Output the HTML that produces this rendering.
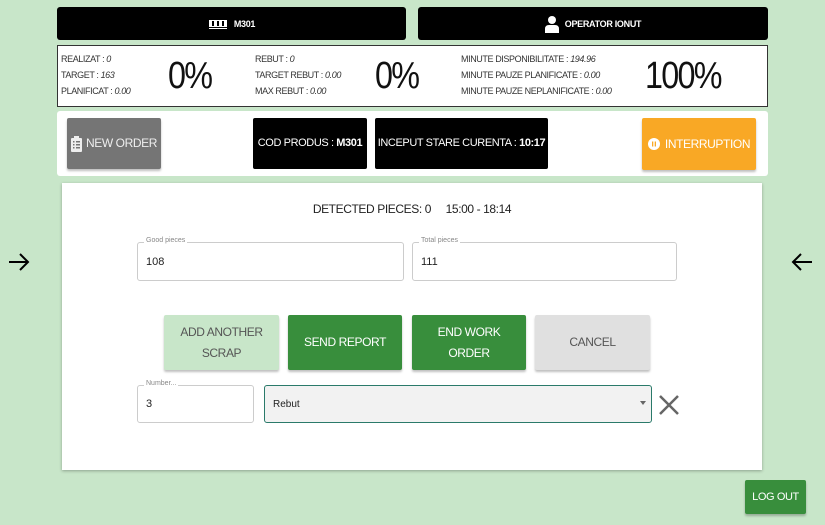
<!DOCTYPE html>
<html><head><style>
*{box-sizing:border-box;margin:0;padding:0}
body{width:825px;height:525px;background:#c8e6c9;font-family:"Liberation Sans",sans-serif;position:relative;overflow:hidden;color:#222}
.a{position:absolute;white-space:nowrap}
.bar{background:#000;color:#fff;border-radius:3px;font-size:9px;font-weight:bold;display:flex;align-items:center;justify-content:center;gap:6px;letter-spacing:-.3px}
.s{font-size:9px;color:#333;line-height:16px;letter-spacing:-.4px}
.s i{font-style:italic}
.big{font-size:38px;color:#111;letter-spacing:-2px;transform:scaleX(.85);transform-origin:left}
.btn{display:flex;align-items:center;justify-content:center;text-align:center;font-size:12px;line-height:21px;border-radius:2px;box-shadow:0 2px 2px rgba(0,0,0,.25);letter-spacing:-.4px}
.fld{background:#fff;border:1px solid #ccc;border-radius:3px;font-size:11px;padding:0 8px;display:flex;align-items:center}
.lbl{position:absolute;top:-6px;left:6px;background:#fff;font-size:7px;color:#888;padding:0 2px}
</style></head><body>
<div class="a bar" style="left:57px;top:7px;width:349px;height:33px"><svg width="20" height="12" viewBox="0 0 20 12"><rect x="1" y="2" width="18" height="7" fill="#fff"/><rect x="4" y="3" width="2" height="5" fill="#000"/><rect x="9" y="3" width="2" height="5" fill="#000"/><rect x="14" y="3" width="2" height="5" fill="#000"/><rect x="1" y="10" width="18" height="1" fill="#fff"/></svg>M301</div>
<div class="a bar" style="left:418px;top:7px;width:350px;height:33px"><svg width="14" height="18" viewBox="0 0 14 18"><circle cx="7" cy="5" r="4" fill="#fff"/><path d="M0 18v-4q0-4 4-4h6q4 0 4 4v4z" fill="#fff"/></svg>OPERATOR IONUT</div>
<div class="a" style="left:57px;top:45px;width:711px;height:62px;background:#fff;border:1px solid #333"></div>
<div class="a s" style="left:61px;top:51px">REALIZAT : <i>0</i><br>TARGET : <i>163</i><br>PLANIFICAT : <i>0.00</i></div>
<div class="a big" style="left:168px;top:55px">0%</div>
<div class="a s" style="left:255px;top:51px">REBUT : <i>0</i><br>TARGET REBUT : <i>0.00</i><br>MAX REBUT : <i>0.00</i></div>
<div class="a big" style="left:375px;top:55px">0%</div>
<div class="a s" style="left:461px;top:51px">MINUTE DISPONIBILITATE : <i>194.96</i><br>MINUTE PAUZE PLANIFICATE : <i>0.00</i><br>MINUTE PAUZE NEPLANIFICATE : <i>0.00</i></div>
<div class="a big" style="left:645px;top:55px">100%</div>
<div class="a" style="left:57px;top:111px;width:711px;height:65px;background:#fff;border-radius:3px"></div>
<div class="a btn" style="left:67px;top:118px;width:94px;height:51px;background:#757575;color:#eee;gap:4px"><svg width="11" height="16" viewBox="0 0 11 16"><rect x="0" y="2" width="11" height="14" rx="1" fill="#eee"/><rect x="3" y="0" width="5" height="3" fill="#eee"/><g fill="#757575"><rect x="2" y="5" width="1.5" height="1.5"/><rect x="5" y="5" width="4" height="1.5"/><rect x="2" y="8" width="1.5" height="1.5"/><rect x="5" y="8" width="4" height="1.5"/><rect x="2" y="11" width="1.5" height="1.5"/><rect x="5" y="11" width="4" height="1.5"/></g></svg>NEW ORDER</div>
<div class="a btn" style="left:253px;top:118px;width:114px;height:51px;background:#000;color:#fff;font-size:11px;box-shadow:none">COD PRODUS :&nbsp;<b>M301</b></div>
<div class="a btn" style="left:375px;top:118px;width:173px;height:51px;background:#000;color:#fff;font-size:11px;box-shadow:none">INCEPUT STARE CURENTA :&nbsp;<b>10:17</b></div>
<div class="a btn" style="left:642px;top:118px;width:114px;height:52px;background:#f9a825;color:#fff;gap:5px"><svg width="12" height="12" viewBox="0 0 12 12"><circle cx="6" cy="6" r="6" fill="#fff"/><rect x="4" y="3.5" width="1.3" height="5" fill="#f9a825"/><rect x="6.7" y="3.5" width="1.3" height="5" fill="#f9a825"/></svg>INTERRUPTION</div>
<div class="a" style="left:62px;top:183px;width:700px;height:287px;background:#fff;box-shadow:0 1px 3px rgba(0,0,0,.3)"></div>
<div class="a" style="left:62px;top:202px;width:700px;text-align:center;font-size:12px;color:#222;letter-spacing:-.4px">DETECTED PIECES: 0 &nbsp;&nbsp;&nbsp;&nbsp;15:00 - 18:14</div>
<div class="a fld" style="left:137px;top:242px;width:267px;height:39px"><span class="lbl">Good pieces</span>108</div>
<div class="a fld" style="left:412px;top:242px;width:265px;height:39px"><span class="lbl">Total pieces</span>111</div>
<div class="a btn" style="left:164px;top:315px;width:115px;height:55px;background:#c8e6c9;color:#555">ADD ANOTHER<br>SCRAP</div>
<div class="a btn" style="left:288px;top:315px;width:114px;height:55px;background:#388e3c;color:#fff">SEND REPORT</div>
<div class="a btn" style="left:412px;top:315px;width:114px;height:55px;background:#388e3c;color:#fff">END WORK<br>ORDER</div>
<div class="a btn" style="left:535px;top:315px;width:115px;height:55px;background:#e0e0e0;color:#555">CANCEL</div>
<div class="a fld" style="left:137px;top:385px;width:117px;height:38px"><span class="lbl">Number...</span>3</div>
<div class="a fld" style="left:264px;top:385px;width:388px;height:38px;background:#f2f2f2;border:1.5px solid #2a7a6a;font-size:10px">Rebut<span style="position:absolute;right:5px;top:15px;border:3px solid transparent;border-top:4px solid #666"></span></div>
<svg class="a" style="left:658px;top:394px" width="22" height="22" viewBox="0 0 22 22"><path d="M2 2L20 20M20 2L2 20" stroke="#666" stroke-width="2.5"/></svg>
<svg class="a" style="left:8px;top:252px" width="22" height="20" viewBox="0 0 22 20"><path d="M1 10H20M12 2l8 8-8 8" stroke="#000" stroke-width="2" fill="none"/></svg>
<svg class="a" style="left:791px;top:252px" width="22" height="20" viewBox="0 0 22 20"><path d="M21 10H2M10 2L2 10l8 8" stroke="#000" stroke-width="2" fill="none"/></svg>
<div class="a btn" style="left:745px;top:480px;width:61px;height:34px;background:#388e3c;color:#fff;font-size:11px">LOG OUT</div>
</body></html>
